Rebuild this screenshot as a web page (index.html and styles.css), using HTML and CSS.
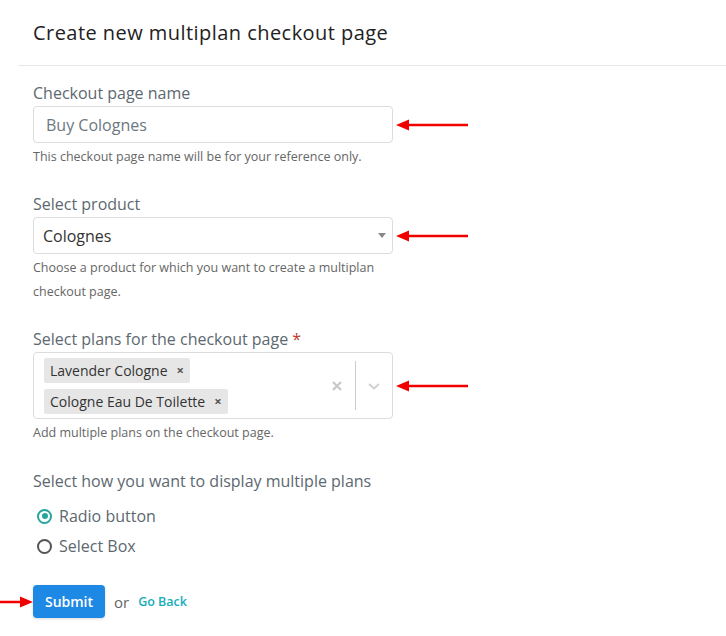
FILE: index.html
```html
<!DOCTYPE html>
<html>
<head>
<meta charset="utf-8">
<link rel="stylesheet" href="styles.css">
</head>
<body>
<div class="page">
  <header class="head"><h1>Create new multiplan checkout page</h1></header>
  <form class="form">
    <div class="field">
      <label class="label">Checkout page name</label>
      <div class="control">
        <div class="input"><span class="placeholder">Buy Colognes</span></div>
        <svg class="arrow" width="76" height="14" viewBox="0 0 76 14"><path d="M2 7 L15 1.5 L15 5.8 L74 5.8 L74 8.2 L15 8.2 L15 12.5 Z" fill="#f10000"/></svg>
      </div>
      <p class="help">This checkout page name will be for your reference only.</p>
    </div>
    <div class="field f2">
      <label class="label">Select product</label>
      <div class="control">
        <div class="input select"><span class="value">Colognes</span><span class="caret"></span></div>
        <svg class="arrow" width="76" height="14" viewBox="0 0 76 14"><path d="M2 7 L15 1.5 L15 5.8 L74 5.8 L74 8.2 L15 8.2 L15 12.5 Z" fill="#f10000"/></svg>
      </div>
      <p class="help tall">Choose a product for which you want to create a multiplan checkout page.</p>
    </div>
    <div class="field">
      <label class="label">Select plans for the checkout page <span class="req">*</span></label>
      <div class="control">
        <div class="multi">
          <div class="chips">
            <span class="chip">Lavender Cologne <span class="x">×</span></span>
            <span class="chip">Cologne Eau De Toilette <span class="x">×</span></span>
          </div>
          <div class="indicators">
            <svg class="clear" width="12" height="12" viewBox="0 0 12 12"><path d="M2 2 L10 10 M10 2 L2 10" stroke="#c8c8c8" stroke-width="2.2"/></svg>
            <span class="sep"></span>
            <svg class="chev" width="14" height="10" viewBox="0 0 14 10"><path d="M2 3 L7 7.5 L12 3" stroke="#d0d0d0" stroke-width="1.8" fill="none"/></svg>
          </div>
        </div>
        <svg class="arrow" width="76" height="14" viewBox="0 0 76 14"><path d="M2 7 L15 1.5 L15 5.8 L74 5.8 L74 8.2 L15 8.2 L15 12.5 Z" fill="#f10000"/></svg>
      </div>
      <p class="help">Add multiple plans on the checkout page.</p>
    </div>
    <div class="field radios">
      <label class="label">Select how you want to display multiple plans</label>
      <div class="radio"><span class="dot on"></span>Radio button</div>
      <div class="radio"><span class="dot"></span>Select Box</div>
    </div>
    <div class="actions">
      <svg class="arrow-left" width="34" height="14" viewBox="0 0 34 14"><path d="M0 5.8 L20 5.8 L20 1.5 L33 7 L20 12.5 L20 8.2 L0 8.2 Z" fill="#f10000"/></svg>
      <button type="button" class="btn">Submit</button>
      <span class="or">or</span>
      <a class="back">Go Back</a>
    </div>
  </form>
</div>
</body>
</html>
```

FILE: styles.css
```css
* { box-sizing: border-box; }
html, body { margin: 0; padding: 0; background: #fff; }
body { font-family: "Open Sans", "Noto Sans", sans-serif; color: #333; }
.page { width: 726px; height: 636px; padding-left: 18px; overflow: hidden; }
.head { border-bottom: 1px solid #e6e6e6; padding: 18px 0 0 15px; height: 66px; }
.head h1 { margin: 0; font-size: 20px; font-weight: 500; color: #222; line-height: 30px; letter-spacing: 0.45px; }
.form { padding-left: 15px; padding-top: 17px; }
.field { margin-bottom: 29px; }
.field.f2 { margin-bottom: 25px; }
.label { display: block; font-size: 16px; color: #5d6870; line-height: 20px; margin-bottom: 3px; }
.req { color: #c0392b; }
.control { position: relative; width: 360px; }
.input { width: 360px; height: 37px; border: 1px solid #dcdcdc; border-radius: 4px; display: flex; align-items: center; padding: 0 12px; font-size: 16px; }
.placeholder { color: #6c7880; }
.select { padding-left: 9px; padding-right: 6px; justify-content: space-between; }
.value { color: #333; }
.caret { width: 0; height: 0; border-left: 4px solid transparent; border-right: 4px solid transparent; border-top: 5px solid #888; }
.arrow { position: absolute; left: 361px; top: 50%; margin-top: -7px; }
.help { margin: 6px 0 0; font-size: 12.5px; color: #666; line-height: 16px; }
.help.tall { line-height: 24px; margin-top: 2px; width: 360px; padding-right: 0; }
.multi { width: 360px; height: 67px; border: 1px solid #dcdcdc; border-radius: 4px; display: flex; align-items: center; padding: 4px 0 4px 10px; }
.chips { flex: 1; display: flex; flex-direction: column; align-items: flex-start; gap: 6px; }
.chip { background: #e6e6e6; border-radius: 2px; height: 25px; display: inline-flex; align-items: center; padding: 0 6px; font-size: 14px; color: #333; }
.chip .x { font-size: 13px; color: #555; margin-left: 9px; font-weight: 700; }
.indicators { display: flex; align-items: center; height: 100%; }
.clear { margin-right: 12px; }
.sep { width: 1px; height: 49px; background: #ccc; }
.chev { margin: 0 11px 0 11px; }
.radios { margin-top: 0; margin-bottom: 0; padding-top: 1px; }
.radios .label { margin-bottom: 10px; }
.radio { display: flex; align-items: center; font-size: 16px; color: #5d6870; height: 30px; padding-left: 4px; }
.dot { width: 15px; height: 15px; border-radius: 50%; border: 2px solid #555; margin-right: 7px; position: relative; }
.dot.on { border-color: #26a69a; }
.dot.on::after { content: ""; position: absolute; left: 2.5px; top: 2.5px; width: 6px; height: 6px; border-radius: 50%; background: #26a69a; }
.actions { display: flex; align-items: center; margin-top: 24px; position: relative; }
.arrow-left { position: absolute; left: -33px; top: 50%; margin-top: -7px; }
.btn { background: #1e88e5; color: #fff; border: none; border-radius: 4px; height: 33px; width: 72px; font-family: inherit; font-size: 14px; font-weight: 600; box-shadow: 0 1px 3px rgba(0,0,0,0.15); }
.or { margin-left: 9px; font-size: 15px; color: #666; }
.back { margin-left: 9px; font-size: 12.5px; font-weight: 600; color: #17adbb; }
```
